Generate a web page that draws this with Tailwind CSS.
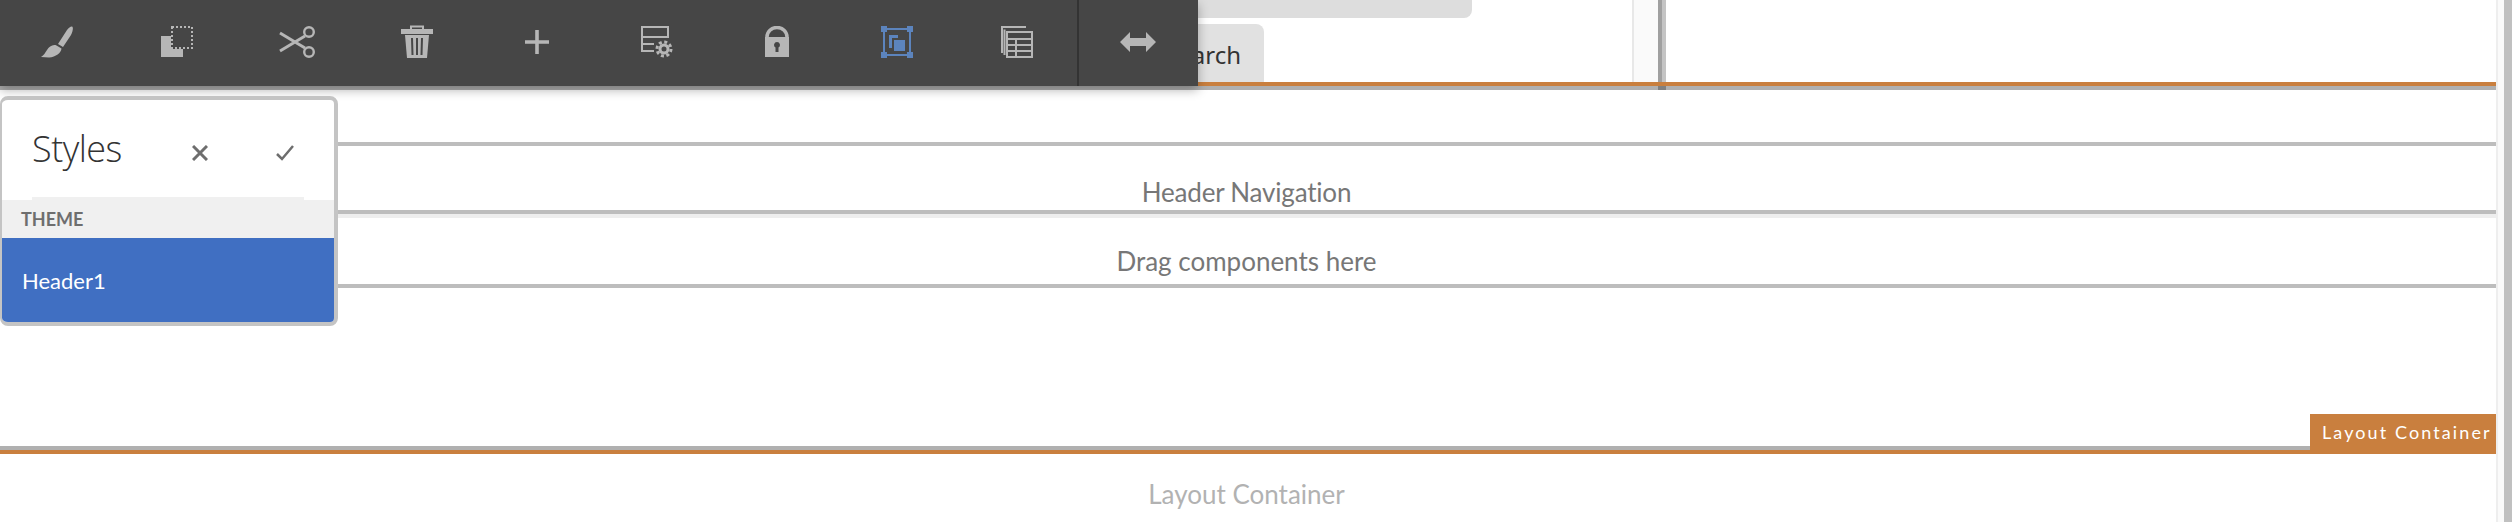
<!DOCTYPE html>
<html lang="en">
<head>
    <meta charset="UTF-8">
    <meta name="viewport" content="width=device-width, initial-scale=1.0">
    <title>Styles - Layout Container</title>
    <script src="https://cdn.jsdelivr.net/npm/@tailwindcss/browser@4"></script>
</head>
<body class="bg-white">

    <div class="relative flex w-[2512px] h-[522px] overflow-hidden bg-white font-['Lato',sans-serif]">

        <!-- Page content -->
        <div class="w-[2496px] flex flex-col">
            <div class="flex h-[82px]">
                <div class="w-[1632px] flex flex-col">
                    <div class="w-[1472px] h-[18px] bg-[#dddddd] rounded-br-lg"></div>
                    <div class="ml-[1100px] mt-[6px] w-[164px] h-[58px] pr-[23px] pt-[15px] bg-[#e1e1e1] rounded-tr-lg text-right text-[24px] leading-[32px] text-[#333333] font-['Noto_Sans',sans-serif]">Search</div>
                </div>
                <div class="w-[2px] bg-[#e8e8e8]"></div>
                <div class="w-[24px] bg-[#fafafa]"></div>
                <div class="w-[4px] bg-[#a0a0a0]"></div>
                <div class="w-[4px] bg-[#c4c4c4]"></div>
            </div>
            <div class="h-[4px] bg-[#c97f3e]"></div>
            <div class="h-[4px] bg-[#b0b0b0] pl-[1658px]">
                <div class="w-[8px] h-[4px] bg-[#808080]"></div>
            </div>

            <div class="h-[52px]"></div>
            <div class="h-[4px] bg-[#bdbdbd]"></div>
            <div class="h-[64px] flex items-end justify-center pr-[3px] text-[26px] leading-[36px] tracking-[-0.2px] text-[#777777]">Header Navigation</div>
            <div class="h-[4px] bg-[#bdbdbd]"></div>
            <div class="h-[4px] bg-[#eeeeee]"></div>
            <div class="h-[66px] flex items-end justify-center pr-[3px] text-[26px] leading-[36px] text-[#777777] pb-[5px]">Drag components here</div>
            <div class="h-[4px] bg-[#bdbdbd]"></div>
            <div class="h-[158px]"></div>
            <div class="h-[4px] bg-[#b0b0b0]"></div>
            <div class="h-[4px] bg-[#c97f3e]"></div>
            <div class="flex-1 flex justify-center pr-[3px] pt-[22px] text-[26px] leading-[36px] text-[#b2b2b2]">Layout Container</div>
        </div>

        <!-- Scrollbar gutter -->
        <div class="w-[2px] bg-[#eeeeee]"></div>
        <div class="w-[6px] bg-[#fafafa]"></div>
        <div class="w-[8px] bg-[#c0c0c0]"></div>

        <!-- Container label -->
        <div class="absolute left-[2310px] top-[414px] w-[186px] h-[39px] pl-[12px] bg-[#c97f3e] text-white text-[18px] leading-[36px] tracking-[2.1px] whitespace-nowrap">Layout Container</div>

        <!-- Edit toolbar -->
        <div class="absolute left-0 top-0 w-[1198px] h-[86px] overflow-hidden bg-[#464646] shadow-[0_4px_10px_rgba(0,0,0,0.3)]">
            <div class="flex -ml-[3px] h-[86px] text-[#b6b6b6]">
                <div class="w-[120px] pb-[2px] flex items-center justify-center">
                    <svg width="32" height="32" viewBox="0 0 32 32" fill="currentColor"><path d="M31 .5c1.500.5 1 4.500-1 8.500l-8 12-5-3 9-14c2-2.500 4-4 5-3.500z"/><path d="M15.500 19.500l5 3c-.5 4.500-5.500 8.500-12.500 9l-8-.5c3-2 4-4 6-7 2-3.500 6-6 9.500-4.500z"/></svg>
                </div>
                <div class="w-[120px] pb-[2px] flex items-center justify-center">
                    <svg width="32" height="32" viewBox="0 0 32 32" fill="currentColor"><path d="M0 10h10v13h12v8H0z"/><rect x="11" y="1" width="20" height="21" fill="none" stroke="currentColor" stroke-width="2" stroke-dasharray="2 2"/></svg>
                </div>
                <div class="w-[120px] pb-[2px] flex items-center justify-center">
                    <svg width="36" height="32" viewBox="0 0 36 32" fill="none" stroke="currentColor"><circle cx="30" cy="6" r="4.800" stroke-width="2.400"/><circle cx="30" cy="26" r="4.800" stroke-width="2.400"/><path d="M1 7l25 15M1 25l25-15" stroke-width="3"/></svg>
                </div>
                <div class="w-[120px] pb-[2px] flex items-center justify-center">
                    <svg width="32" height="34" viewBox="0 0 32 34" fill="currentColor"><path d="M0 4h32v5H0z"/><path d="M10 5V1.500h12V5" fill="none" stroke="currentColor" stroke-width="2"/><path d="M4 10h24l-2 23H6z"/><path d="M11 13l.5 17M16 13v17M21 13l-.5 17" stroke="#464646" stroke-width="2"/></svg>
                </div>
                <div class="w-[120px] pb-[2px] flex items-center justify-center">
                    <svg width="24" height="24" viewBox="0 0 24 24" fill="currentColor"><path d="M10.200 0h3.600v10.200H24v3.600H13.800V24h-3.600V13.800H0v-3.600h10.200z"/></svg>
                </div>
                <div class="w-[120px] pb-[2px] flex items-center justify-center">
                    <svg width="32" height="32" viewBox="0 0 32 32" fill="none" stroke="currentColor"><path d="M1 11V1h26v10H1v14h12M1 18h12" stroke-width="2"/><circle cx="23" cy="23" r="4" stroke-width="3"/><circle cx="23" cy="23" r="7" stroke-width="3" stroke-dasharray="3 2.500"/></svg>
                </div>
                <div class="w-[120px] pb-[2px] flex items-center justify-center">
                    <svg width="32" height="32" viewBox="0 0 32 32" fill="currentColor"><path d="M6 13V11a10 9.500 0 0 1 20 0v2" fill="none" stroke="currentColor" stroke-width="3.500"/><path fill-rule="evenodd" d="M4 11h24v20H4zM16 16a3 3 0 0 0-1.500 5.600V26h3v-4.400A3 3 0 0 0 16 16z"/></svg>
                </div>
                <div class="w-[120px] pb-[2px] flex items-center justify-center text-[#5c84bd]">
                    <svg width="32" height="32" viewBox="0 0 32 32" fill="currentColor"><rect x="3" y="3" width="26" height="26" fill="none" stroke="currentColor" stroke-width="2"/><path d="M0 0h6v6H0zM26 0h6v6h-6zM0 26h6v6H0zM26 26h6v6h-6z"/><path d="M8 9h9v3h-6v10H8z"/><path d="M13 14h11v11H13z"/></svg>
                </div>
                <div class="w-[120px] pb-[2px] flex items-center justify-center">
                    <svg width="32" height="32" viewBox="0 0 32 32" fill="none" stroke="currentColor" stroke-width="2"><path d="M1 27V1h24M3.500 29V3.500"/><rect x="6" y="6" width="25" height="25"/><path d="M6 13h25M6 19h25M6 25h25M15 13v18"/></svg>
                </div>
                <div class="w-[120px] pb-[2px] border-l-2 border-[#333333] flex items-center justify-center">
                    <svg width="36" height="20" viewBox="0 0 36 20" fill="currentColor"><path d="M0 10L10 0v6h16V0l10 10-10 10v-6H10v6z"/></svg>
                </div>
            </div>
        </div>

        <!-- Styles popover -->
        <div class="absolute left-0 top-[96px] w-[338px] h-[230px] flex flex-col border-[4px] border-l-2 border-[#c4c4c4] rounded-lg bg-white overflow-hidden">
            <div class="h-[100px] ml-[30px] mr-[30px] flex items-center border-b-[3px] border-[#f0f0f0]">
                <div class="w-[150px] text-[36px] font-light leading-[44px] tracking-[-0.5px] text-[#333333] font-['Open_Sans',sans-serif]">Styles</div>
                <svg class="mt-[8px] ml-[10px]" width="16" height="16" viewBox="0 0 16 16" fill="none" stroke="#6e6e6e" stroke-width="3"><path d="M1 1l14 14M15 1L1 15"/></svg>
                <svg class="mt-[8px] ml-[68px]" width="18" height="16" viewBox="0 0 18 16" fill="none" stroke="#6e6e6e" stroke-width="2.500"><path d="M1 9l5 5L17 1"/></svg>
            </div>
            <div class="h-[38px] pl-[19px] flex items-center bg-[#f0f0f0] text-[18px] font-bold text-[#6e6e6e]">THEME</div>
            <div class="flex-1 pl-[20px] flex items-center bg-[#406fc2] text-[22px] text-white">Header1</div>
        </div>

    </div>

</body>
</html>
